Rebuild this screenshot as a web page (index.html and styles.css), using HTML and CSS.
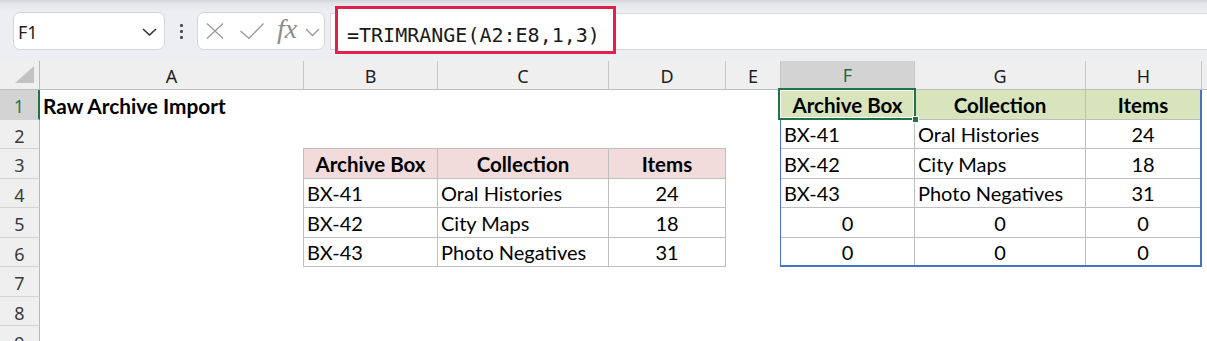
FILE: index.html
```html
<!DOCTYPE html>
<html>
<head>
<meta charset="utf-8">
<link rel="stylesheet" href="styles.css">
</head>
<body>
<div class="toolbar">
  <div class="namebox">
    <span class="nb-text">F1</span>
    <svg class="nb-chev" width="15" height="8" viewBox="0 0 15 8"><polyline points="1,1 7.5,7 14,1" fill="none" stroke="#333" stroke-width="1.6"/></svg>
  </div>
  <div class="dots"><span></span><span></span><span></span></div>
  <div class="fxbox">
    <svg class="ic-x" width="18" height="16" viewBox="0 0 18 16"><path d="M1 0.5 L17 15.5 M17 0.5 L1 15.5" stroke="#999" stroke-width="1.3" fill="none"/></svg>
    <svg class="ic-check" width="24" height="16" viewBox="0 0 24 16"><polyline points="0.5,8 9,15.3 23.5,0.5" stroke="#999" stroke-width="1.3" fill="none"/></svg>
    <span class="fx">fx</span>
    <svg class="ic-chev" width="15" height="9" viewBox="0 0 15 9"><polyline points="1,1 7.5,7.5 14,1" fill="none" stroke="#999" stroke-width="1.3"/></svg>
  </div>
  <div class="formula">
    <div class="formula-hl">=TRIMRANGE(A2:E8,1,3)</div>
  </div>
</div>

<div class="sheet">
  <div class="corner"><svg width="20" height="18" viewBox="0 0 20 18"><polygon points="19,0 19,17 0,17" fill="#c2c2c2"/></svg></div>
  <div class="ch">A</div>
  <div class="ch">B</div>
  <div class="ch">C</div>
  <div class="ch">D</div>
  <div class="ch">E</div>
  <div class="ch ch-sel">F</div>
  <div class="ch">G</div>
  <div class="ch">H</div>
  <div class="ch ch-last"></div>

  <div class="rh rh-sel">1</div>
  <div class="rh">2</div>
  <div class="rh">3</div>
  <div class="rh">4</div>
  <div class="rh">5</div>
  <div class="rh">6</div>
  <div class="rh">7</div>
  <div class="rh">8</div>
  <div class="rh rh-last">9</div>

  <div class="title">Raw Archive Import</div>

  <div class="tbl tbl-raw">
    <div class="c hd">Archive Box</div>
    <div class="c hd">Collection</div>
    <div class="c hd">Items</div>
    <div class="c">BX-41</div>
    <div class="c">Oral Histories</div>
    <div class="c num">24</div>
    <div class="c">BX-42</div>
    <div class="c">City Maps</div>
    <div class="c num">18</div>
    <div class="c">BX-43</div>
    <div class="c">Photo Negatives</div>
    <div class="c num">31</div>
  </div>

  <div class="tbl tbl-trim">
    <div class="c hd active">Archive Box<div class="sel"><span class="handle"></span></div></div>
    <div class="c hd">Collection</div>
    <div class="c hd lastc">Items</div>
    <div class="c">BX-41</div>
    <div class="c">Oral Histories</div>
    <div class="c num lastc">24</div>
    <div class="c">BX-42</div>
    <div class="c">City Maps</div>
    <div class="c num lastc">18</div>
    <div class="c">BX-43</div>
    <div class="c">Photo Negatives</div>
    <div class="c num lastc">31</div>
    <div class="c num">0</div>
    <div class="c num">0</div>
    <div class="c num lastc">0</div>
    <div class="c num lastr">0</div>
    <div class="c num lastr">0</div>
    <div class="c num lastr lastc">0</div>
  </div>
</div>
</body>
</html>
```

FILE: styles.css
```css
* { box-sizing: border-box; }
html, body {
  margin: 0;
  padding: 0;
  width: 1207px;
  height: 341px;
  overflow: hidden;
  background: #ffffff;
  font-family: "Noto Sans", "Open Sans", sans-serif;
}

/* ---------- toolbar ---------- */
.toolbar {
  height: 61px;
  display: flex;
  align-items: flex-start;
  padding: 12px 0 0 13px;
  background: linear-gradient(to bottom, #d3d4d7 0px, #e5e7ea 4px, #eceef1 12px, #eceef1 100%);
}
.namebox {
  width: 152px;
  height: 38px;
  background: #ffffff;
  border: 1px solid #d3d5d8;
  border-radius: 7px;
  display: flex;
  align-items: center;
  padding: 0 7px 0 4px;
}
.nb-text {
  font-size: 18px;
  color: #1f1f1f;
  flex: 1;
  padding-top: 1px;
}
.nb-chev { margin-top: 2px; }
.dots {
  width: 3px;
  margin: 12px 14px 0 15px;
  display: flex;
  flex-direction: column;
  gap: 3px;
}
.dots span {
  width: 3px;
  height: 3px;
  border-radius: 1px;
  background: #4a4f57;
}
.fxbox {
  width: 128px;
  height: 38px;
  background: #ffffff;
  border: 1px solid #d3d5d8;
  border-radius: 7px;
  display: flex;
  align-items: center;
  padding-left: 8px;
}
.ic-check { margin-left: 16px; }
.fx {
  margin-left: 13px;
  width: 22px;
  font-family: "Liberation Serif", "DejaVu Serif", serif;
  font-style: italic;
  font-size: 28px;
  color: #8c8c8c;
  line-height: 1;
  margin-top: -4px;
}
.ic-chev { margin-left: 6px; margin-top: 2px; }

.formula {
  flex: 1;
  height: 37px;
  margin: 1px 0 0 5px;
  background: #ffffff;
  border-top: 1px solid #d6d8db;
  border-bottom: 1px solid #d6d8db;
  border-left: 1px solid #d6d8db;
  display: flex;
  align-items: flex-start;
}
.formula-hl {
  margin: -8px 0 0 4px;
  width: 281px;
  height: 48px;
  border: 3px solid #e1214c;
  background: #ffffff;
  padding: 14px 0 0 9px;
  font-family: "DejaVu Sans Mono", "Liberation Mono", monospace;
  font-size: 20px;
  line-height: 24px;
  color: #1a1a1a;
  white-space: nowrap;
}

/* ---------- sheet ---------- */
.sheet {
  display: grid;
  grid-template-columns: 40px 264px 134px 171px 117px 55px 134px 171px 116px 1fr;
  grid-template-rows: 29px 30px 29px 30px 29px 30px 29px 30px 29px 1fr;
  height: 280px;
}
.corner {
  background: #efefef;
  border-right: 1px solid #b9b9b9;
  border-bottom: 1px solid #bdbdbd;
  display: flex;
  align-items: flex-end;
  justify-content: flex-end;
  padding: 0 4px 5px 0;
}
.ch {
  background: #efefef;
  border-right: 1px solid #c6c6c6;
  border-bottom: 1px solid #bdbdbd;
  display: flex;
  align-items: center;
  justify-content: center;
  font-size: 18px;
  color: #1e1e1e;
  padding-top: 1px;
}
.ch-last { border-right: none; }
.ch-sel {
  background: #d3d3d3;
  color: #1d6b40;
  border-bottom: 2px solid #217346;
}
.rh {
  grid-column: 1;
  background: #efefef;
  border-right: 1px solid #b9b9b9;
  border-bottom: 1px solid #d3d3d3;
  display: flex;
  align-items: center;
  justify-content: center;
  font-size: 18px;
  color: #3a3a3a;
  padding-top: 3px;
}
.rh-last { border-bottom: none; align-items: flex-start; padding-top: 5px; }
.rh-sel {
  background: #d3d3d3;
  color: #1d7a45;
  border-right: 2px solid #217346;
}

.title {
  grid-row: 2;
  grid-column: 2 / 5;
  display: flex;
  align-items: center;
  padding: 0 0 0 3px;
  font-family: "Lato", "Open Sans", sans-serif;
  font-weight: 700;
  font-size: 20.8px;
  color: #000;
  white-space: nowrap;
}

.tbl {
  display: grid;
  font-family: "Lato", "Open Sans", sans-serif;
  font-size: 20px;
  color: #000;
}
.c {
  border-right: 1px solid #bfbfbf;
  border-bottom: 1px solid #bfbfbf;
  display: flex;
  align-items: center;
  padding: 0 3px;
  white-space: nowrap;
}
.c.hd { justify-content: center; font-weight: 700; font-size: 20.5px; }
.c.num { justify-content: center; }

.tbl-raw {
  grid-row: 4 / 8;
  grid-column: 3 / 6;
  margin: -1px 0 0 -1px;
  border-left: 1px solid #bfbfbf;
  border-top: 1px solid #bfbfbf;
  grid-template-columns: 134px 171px 117px;
  grid-template-rows: 30px 29px 30px 29px;
}
.tbl-raw .hd { background: #f2dcdb; }

.tbl-trim {
  grid-row: 2 / 8;
  grid-column: 7 / 10;
  margin-left: -1px;
  border-left: 1px solid #4472c4;
  border-right: 2px solid #4472c4;
  border-bottom: 2px solid #4472c4;
  grid-template-columns: 134px 171px 114px;
  grid-template-rows: 30px 29px 30px 29px 30px 27px;
}
.tbl-trim .hd { background: #d8e4bc; }
.tbl-trim .lastc { border-right: none; }
.tbl-trim .lastr { border-bottom: none; }

.active { position: relative; }
.sel {
  position: absolute;
  left: -3px;
  right: -2px;
  top: -2px;
  bottom: -1px;
  border: 2px solid #217346;
  box-shadow: inset 0 0 0 1px #ffffff;
}
.handle {
  position: absolute;
  right: -5px;
  bottom: -5px;
  width: 7px;
  height: 7px;
  background: #217346;
  border: 1px solid #ffffff;
}
```
